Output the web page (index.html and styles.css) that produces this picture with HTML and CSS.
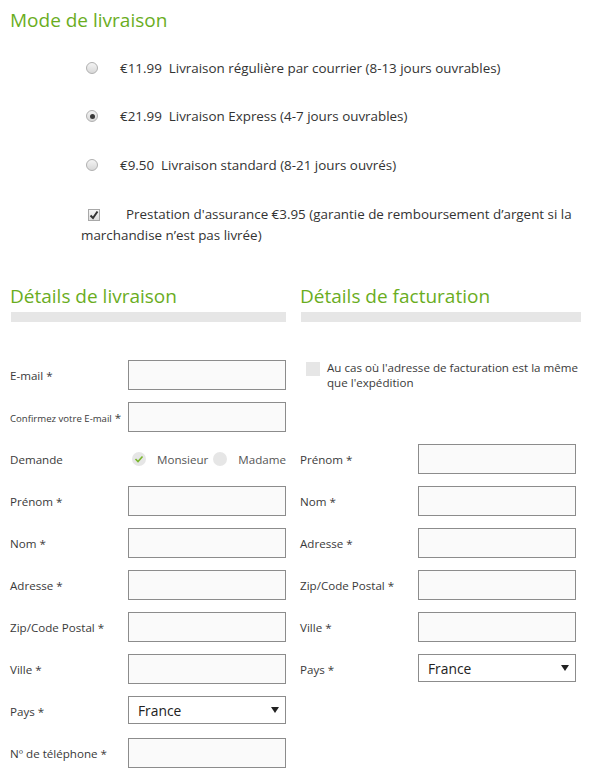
FILE: index.html
```html
<!DOCTYPE html>
<html>
  <head>
    <title>Livraison</title>
    <link rel="stylesheet" href="styles.css">
  </head>
  <body>
    <h2 class="title">Mode de livraison</h2>
    <div class="shipping">
      <label class="opt"><span class="radio"></span>€11.99&nbsp; Livraison régulière par courrier (8-13 jours ouvrables)</label>
      <label class="opt"><span class="radio on"></span>€21.99&nbsp; Livraison Express (4-7 jours ouvrables)</label>
      <label class="opt"><span class="radio"></span>€9.50&nbsp; Livraison standard (8-21 jours ouvrés)</label>
    </div>
    <p class="insurance"><span class="check"><svg width="10" height="10" viewBox="0 0 10 10"><path d="M1.5 5.5 L4 8 L8.5 1.5" fill="none" stroke="#333" stroke-width="2"/></svg></span>Prestation d'assurance €3.95 (garantie de remboursement d’argent si la marchandise n’est pas livrée)</p>

    <div class="cols">
      <div class="col">
        <h2 class="title">Détails de livraison</h2>
        <div class="bar"></div>
        <div class="row"><label>E-mail *</label><input type="text"></div>
        <div class="row"><label><span class="small">Confirmez votre E-mail</span> *</label><input type="text"></div>
        <div class="row">
          <label>Demande</label>
          <div class="gender">
            <span class="dot on"><svg width="10" height="10" viewBox="0 0 10 10"><path d="M1.5 5 L4 7.5 L8.5 2.5" fill="none" stroke="#7ab62d" stroke-width="1.6"/></svg></span><span class="gname">Monsieur</span>
            <span class="dot"></span><span class="gname">Madame</span>
          </div>
        </div>
        <div class="row"><label>Prénom *</label><input type="text"></div>
        <div class="row"><label>Nom *</label><input type="text"></div>
        <div class="row"><label>Adresse *</label><input type="text"></div>
        <div class="row"><label>Zip/Code Postal *</label><input type="text"></div>
        <div class="row"><label>Ville *</label><input type="text"></div>
        <div class="row"><label>Pays *</label><div class="sel"><select><option>France</option></select><svg class="arrow" width="8" height="6" viewBox="0 0 8 6"><path d="M0 0 H8 L4 6 Z" fill="#222"/></svg></div></div>
        <div class="row"><label>Nº de téléphone *</label><input type="text"></div>
      </div>

      <div class="col">
        <h2 class="title">Détails de facturation</h2>
        <div class="bar"></div>
        <div class="same"><span class="box"></span><span>Au cas où l'adresse de facturation est la même que l'expédition</span></div>
        <div class="row"><label>Prénom *</label><input type="text"></div>
        <div class="row"><label>Nom *</label><input type="text"></div>
        <div class="row"><label>Adresse *</label><input type="text"></div>
        <div class="row"><label>Zip/Code Postal *</label><input type="text"></div>
        <div class="row"><label>Ville *</label><input type="text"></div>
        <div class="row"><label>Pays *</label><div class="sel"><select><option>France</option></select><svg class="arrow" width="8" height="6" viewBox="0 0 8 6"><path d="M0 0 H8 L4 6 Z" fill="#222"/></svg></div></div>
      </div>
    </div>
  </body>
</html>
```

FILE: styles.css
```css
body { margin: 0; padding: 8px 0 0 10px; font-family: "Open Sans", "Noto Sans", sans-serif; color: #333; font-size: 13.4px; }

.title { margin: 0; font-size: 19px; line-height: 24px; font-weight: normal; color: #6aad1e; }

.shipping { padding-left: 76px; margin-top: 25px; }
.opt { display: flex; align-items: center; height: 21px; margin-bottom: 27.5px; }
.opt:last-child { margin-bottom: 0; }
.radio { width: 12px; height: 12px; box-sizing: border-box; border: 1px solid #b0b0b0; border-radius: 50%; background: linear-gradient(#f4f4f4, #d8d8d8); margin-right: 22px; position: relative; }
.radio.on::after { content: ""; position: absolute; left: 2.5px; top: 2.5px; width: 5px; height: 5px; border-radius: 50%; background: #3a3a3a; }

.insurance { margin: 29px 0 0 0; padding-left: 71px; padding-right: 10px; line-height: 21px; }
.check { display: inline-flex; align-items: center; justify-content: center; width: 12px; height: 12px; box-sizing: border-box; border: 1px solid #a8a8a8; background: linear-gradient(#f6f6f6, #dedede); margin: 0 26px 0 7px; vertical-align: -1px; }

.cols { display: grid; grid-template-columns: 276px 281px; column-gap: 14px; margin-top: 38px; }
.bar { height: 10px; margin: 4px 0 38px 1px; background: #e6e6e6; }

.row { display: flex; align-items: center; height: 30px; margin-bottom: 12px; }
.row label { width: 118px; flex: none; font-size: 11.6px; color: #3a3a3a; padding-top: 1px; }
.row input { width: 158px; height: 30px; box-sizing: border-box; margin: 0; border: 1px solid #8c8c8c; background: #fafafa; }
.small { font-size: 9.6px; }

.gender { display: flex; align-items: center; padding-left: 4px; font-size: 11.6px; color: #555; }
.dot { width: 14px; height: 14px; border-radius: 50%; background: #e6e6e6; display: flex; align-items: center; justify-content: center; }
.gname { margin: 0 5px 0 11px; padding-top: 1px; }

.sel { position: relative; align-self: flex-start; }
.sel select { appearance: none; width: 158px; height: 28px; box-sizing: border-box; margin: 0; border: 1px solid #8c8c8c; border-radius: 0; background: #fff; padding: 0 0 0 9px; font-family: "Open Sans", sans-serif; font-size: 13.8px; color: #222; }
.sel .arrow { position: absolute; right: 7px; top: 11px; }

.same { display: flex; align-items: flex-start; height: 72px; margin-bottom: 12px; font-size: 11.6px; line-height: 15px; color: #3a3a3a; }
.same .box { width: 14px; height: 14px; flex: none; background: #e6e6e6; margin: 2px 7px 0 6px; }
```
